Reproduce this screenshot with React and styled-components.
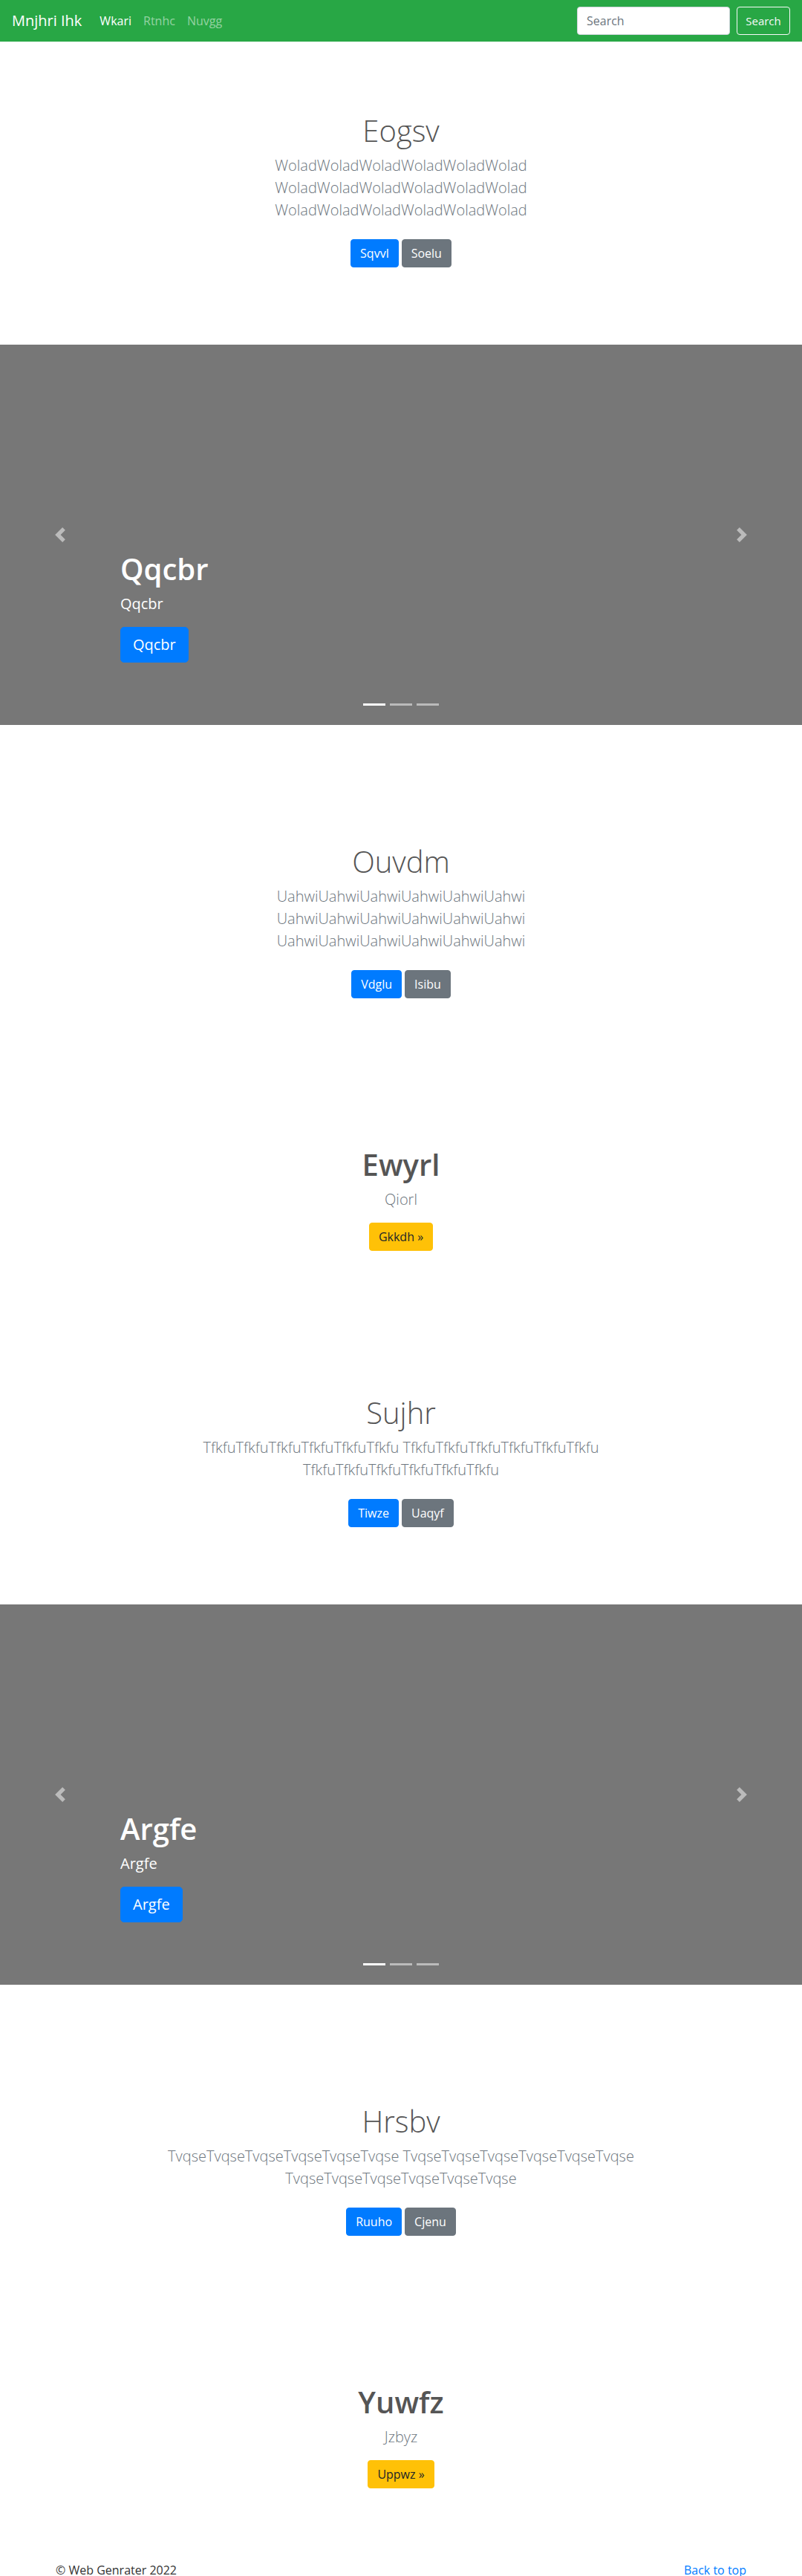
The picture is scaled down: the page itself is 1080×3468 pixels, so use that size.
import styled, { createGlobalStyle } from "styled-components";

const GlobalStyle = createGlobalStyle`
  * {
    box-sizing: border-box;
  }

  body {
    margin: 0;
    font-family: "Open Sans", "Noto Sans", "Liberation Sans", sans-serif;
    font-size: 16px;
    line-height: 1.5;
    color: #212529;
    background: #fff;
  }
`;

const repeat = (word, n) => Array(n).fill(word).join("");

// lead text is kept in the lines it wraps to on the original page
const PAGE = [
  {
    kind: "hero",
    title: "Eogsv",
    lines: [repeat("Wolad", 6), repeat("Wolad", 6), repeat("Wolad", 6)],
    primary: "Sqvvl",
    secondary: "Soelu"
  },
  { kind: "carousel", title: "Qqcbr" },
  {
    kind: "hero",
    title: "Ouvdm",
    lines: [repeat("Uahwi", 6), repeat("Uahwi", 6), repeat("Uahwi", 6)],
    primary: "Vdglu",
    secondary: "Isibu"
  },
  { kind: "feature", title: "Ewyrl", lead: "Qiorl", action: "Gkkdh »" },
  {
    kind: "hero",
    title: "Sujhr",
    lines: [repeat("Tfkfu", 6) + " " + repeat("Tfkfu", 6), repeat("Tfkfu", 6)],
    primary: "Tiwze",
    secondary: "Uaqyf"
  },
  { kind: "carousel", title: "Argfe" },
  {
    kind: "hero",
    title: "Hrsbv",
    lines: [repeat("Tvqse", 6) + " " + repeat("Tvqse", 6), repeat("Tvqse", 6)],
    primary: "Ruuho",
    secondary: "Cjenu"
  },
  { kind: "feature", title: "Yuwfz", lead: "Jzbyz", action: "Uppwz »" }
];

export default function App() {
  return (
    <>
      <GlobalStyle />
      <Navbar>
        <Brand href="#">Mnjhri Ihk</Brand>
        <NavLinks>
          <NavLink href="#" $active>
            Wkari
          </NavLink>
          <NavLink href="#">Rtnhc</NavLink>
          <NavLink href="#">Nuvgg</NavLink>
        </NavLinks>
        <SearchForm onSubmit={(e) => e.preventDefault()}>
          <SearchInput type="text" placeholder="Search" />
          <OutlineButton type="submit">Search</OutlineButton>
        </SearchForm>
      </Navbar>

      <main>
        {PAGE.map((block, index) => {
          if (block.kind === "carousel") {
            return <Slide key={index} title={block.title} />;
          }
          if (block.kind === "feature") {
            return (
              <Feature key={index}>
                <FeatureTitle>{block.title}</FeatureTitle>
                <Lead>{block.lead}</Lead>
                <Button $variant="warning">{block.action}</Button>
              </Feature>
            );
          }
          return (
            <Hero key={index}>
              <HeroContainer>
                <HeroTitle>{block.title}</HeroTitle>
                <Lead>
                  {block.lines.map((line, i) => (
                    <LeadLine key={i}>{line}</LeadLine>
                  ))}
                </Lead>
                <ButtonRow>
                  <Button $variant="primary">{block.primary}</Button>
                  <Button $variant="secondary">{block.secondary}</Button>
                </ButtonRow>
              </HeroContainer>
            </Hero>
          );
        })}
      </main>

      <Footer>
        <p>© Web Genrater 2022</p>
        <p>
          <a href="#">Back to top</a>
        </p>
      </Footer>
    </>
  );
}

function Slide({ title }) {
  return (
    <Carousel>
      <Indicators>
        <Indicator $active />
        <Indicator />
        <Indicator />
      </Indicators>
      <Caption>
        <CaptionTitle>{title}</CaptionTitle>
        <CaptionText>{title}</CaptionText>
        <Button $variant="primary" $size="lg">
          {title}
        </Button>
      </Caption>
      <Control $side="left">
        <svg width="20" height="20" viewBox="0 0 8 8" fill="#fff">
          <path d="M5.25 0l-4 4 4 4 1.5-1.5L4.25 4l2.5-2.5L5.25 0z" />
        </svg>
      </Control>
      <Control $side="right">
        <svg width="20" height="20" viewBox="0 0 8 8" fill="#fff">
          <path d="M2.75 0l-1.5 1.5L3.75 4l-2.5 2.5L2.75 8l4-4-4-4z" />
        </svg>
      </Control>
    </Carousel>
  );
}

/* Navbar */

const Navbar = styled.nav`
  display: flex;
  align-items: center;
  height: 56px;
  padding: 8px 16px;
  background-color: #28a745;
`;

const Brand = styled.a`
  margin-right: 16px;
  font-size: 20px;
  line-height: 30px;
  color: #fff;
  text-decoration: none;
  white-space: nowrap;
`;

const NavLinks = styled.div`
  display: flex;
`;

const NavLink = styled.a`
  padding: 8px;
  color: ${(p) => (p.$active ? "#fff" : "rgba(255, 255, 255, 0.5)")};
  text-decoration: none;
`;

const SearchForm = styled.form`
  display: flex;
  gap: 9px;
  margin: 0 0 0 auto;
`;

const SearchInput = styled.input`
  width: 206px;
  height: 38px;
  padding: 6px 12px;
  font-family: inherit;
  font-size: 16px;
  color: #495057;
  border: 1px solid #ced4da;
  border-radius: 4px;

  &::placeholder {
    color: #6c757d;
  }
`;

const OutlineButton = styled.button`
  width: 72px;
  height: 38px;
  padding: 6px 0;
  font-family: inherit;
  font-size: 15px;
  color: #f8f9fa;
  background: transparent;
  border: 1px solid #f8f9fa;
  border-radius: 4px;
`;

/* Shared */

const VARIANTS = {
  primary: { bg: "#007bff", fg: "#fff" },
  secondary: { bg: "#6c757d", fg: "#fff" },
  warning: { bg: "#ffc107", fg: "#212529" }
};

const Button = styled.a`
  display: inline-block;
  padding: ${(p) => (p.$size === "lg" ? "8px 16px" : "6px 12px")};
  font-size: ${(p) => (p.$size === "lg" ? "20px" : "16px")};
  line-height: 1.5;
  border: 1px solid ${(p) => VARIANTS[p.$variant].bg};
  border-radius: ${(p) => (p.$size === "lg" ? "5px" : "4px")};
  background-color: ${(p) => VARIANTS[p.$variant].bg};
  color: ${(p) => VARIANTS[p.$variant].fg};
  text-decoration: none;
  cursor: pointer;
`;

const Lead = styled.p`
  display: flex;
  flex-direction: column;
  align-items: center;
  margin: 0 0 16px;
  font-size: 20px;
  font-weight: 300;
  line-height: 1.5;
  color: #6c757d;
`;

const LeadLine = styled.span`
  white-space: nowrap;
`;

/* Hero ("jumbotron") sections */

const Hero = styled.section`
  padding: 96px 0;
  text-align: center;
`;

const HeroContainer = styled.div`
  max-width: 640px;
  margin: 0 auto;
  padding: 0 15px;
`;

const HeroTitle = styled.h1`
  margin: 0 0 8px;
  font-size: 40px;
  font-weight: 300;
  line-height: 1.2;
  color: #555;
`;

const ButtonRow = styled.div`
  display: flex;
  justify-content: center;
  gap: 4px;
  padding: 8px 0;
`;

/* Feature sections */

const Feature = styled.section`
  padding: 96px 0 98px;
  text-align: center;
`;

const FeatureTitle = styled.h1`
  margin: 0 0 8px;
  font-size: 40px;
  font-weight: 600;
  line-height: 48px;
  color: #555;
`;

/* Carousel */

const Carousel = styled.div`
  position: relative;
  height: 512px;
  margin-bottom: 64px;
  background-color: #777;
  overflow: hidden;
`;

const Caption = styled.div`
  position: absolute;
  left: 15%;
  right: 15%;
  bottom: 48px;
  padding: 20px 0 36px;
  color: #fff;
  text-align: left;
  z-index: 10;
`;

const CaptionTitle = styled.h1`
  margin: 0 0 8px;
  font-size: 40px;
  font-weight: 600;
  line-height: 1.2;
`;

const CaptionText = styled.p`
  margin: 0 0 16px;
  font-size: 20px;
  line-height: 1.5;
`;

const Control = styled.a`
  position: absolute;
  top: 0;
  bottom: 0;
  ${(p) => p.$side}: 0;
  width: 15%;
  display: flex;
  align-items: center;
  justify-content: center;
  opacity: 0.5;
  z-index: 5;
`;

const Indicators = styled.ol`
  position: absolute;
  left: 0;
  right: 0;
  bottom: 0;
  display: flex;
  justify-content: center;
  margin: 0 0 16px;
  padding: 0;
  list-style: none;
  z-index: 15;
`;

const Indicator = styled.li`
  width: 30px;
  height: 3px;
  margin: 10px 3px;
  background-color: #fff;
  opacity: ${(p) => (p.$active ? 1 : 0.5)};
`;

/* Footer */

const Footer = styled.footer`
  display: flex;
  justify-content: space-between;
  max-width: 960px;
  margin: 0 auto;
  padding: 0 15px;
  color: #333;

  p {
    margin: 0 0 16px;
  }

  a {
    color: #007bff;
    text-decoration: none;
  }
`;
